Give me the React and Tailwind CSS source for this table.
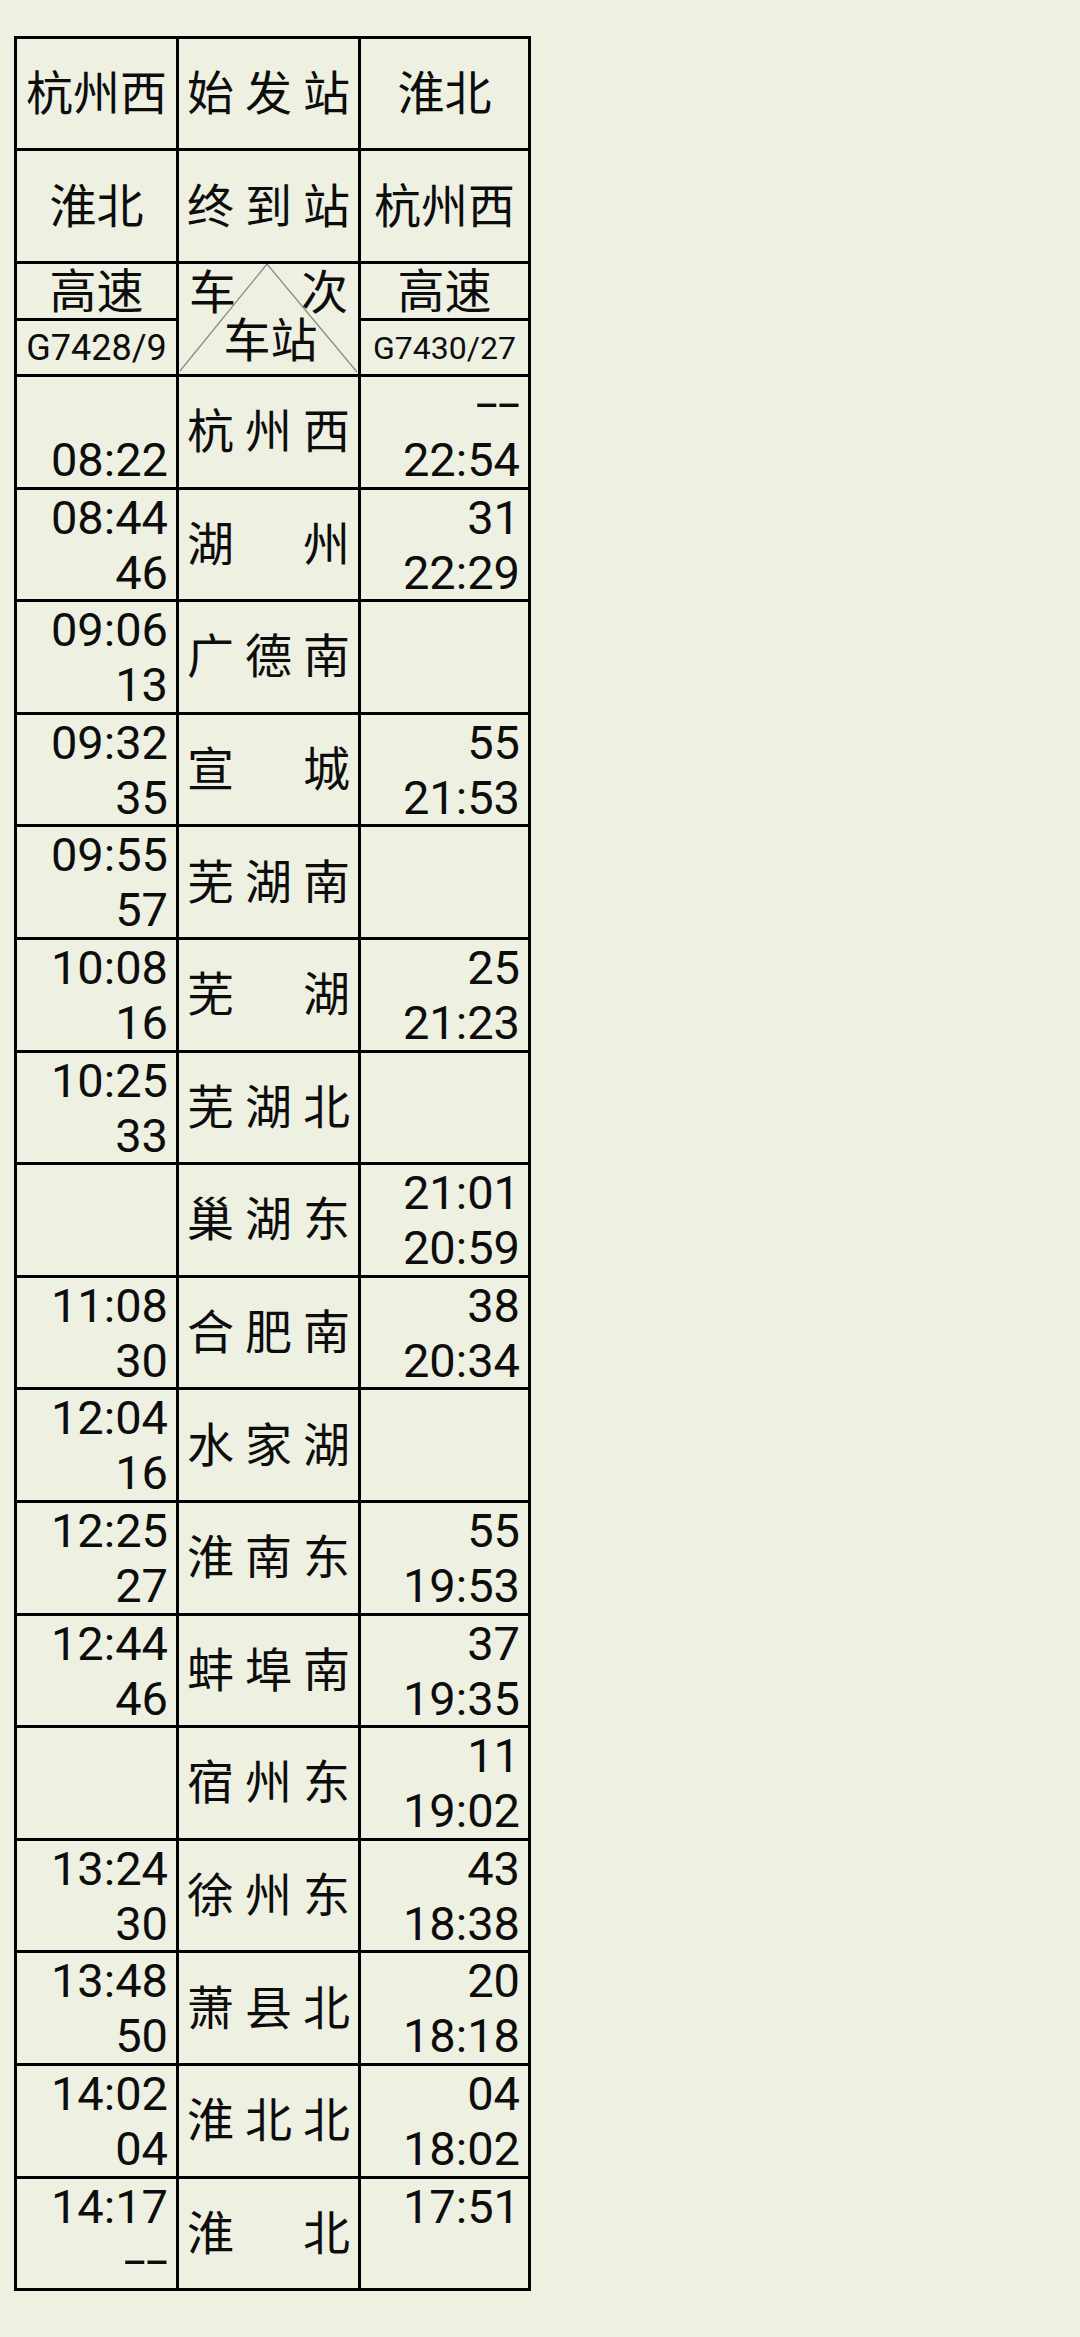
import React from "react";

const data = [
  ["", "08:22", "杭州西", "--", "22:54"],
  ["08:44", "46", "湖州", "31", "22:29"],
  ["09:06", "13", "广德南", "", ""],
  ["09:32", "35", "宣城", "55", "21:53"],
  ["09:55", "57", "芜湖南", "", ""],
  ["10:08", "16", "芜湖", "25", "21:23"],
  ["10:25", "33", "芜湖北", "", ""],
  ["", "", "巢湖东", "21:01", "20:59"],
  ["11:08", "30", "合肥南", "38", "20:34"],
  ["12:04", "16", "水家湖", "", ""],
  ["12:25", "27", "淮南东", "55", "19:53"],
  ["12:44", "46", "蚌埠南", "37", "19:35"],
  ["", "", "宿州东", "11", "19:02"],
  ["13:24", "30", "徐州东", "43", "18:38"],
  ["13:48", "50", "萧县北", "20", "18:18"],
  ["14:02", "04", "淮北北", "04", "18:02"],
  ["14:17", "--", "淮北", "17:51", ""],
];

function Line({ t }) {
  if (t === "--") {
    return (
      <div className="h-[55px] leading-[55px]">
        <span className="inline-block origin-right scale-x-[1.7] -translate-y-[2px]">--</span>
      </div>
    );
  }
  return <div className="h-[55px] leading-[55px]">{t}</div>;
}

function TimeCell({ a, b, w }) {
  return (
    <div className={`${w} h-full flex flex-col items-end pr-[8px] border-r-[3px] border-black overflow-visible`}>
      <Line t={a} />
      <Line t={b} />
    </div>
  );
}

function Spread({ text, className = "" }) {
  return (
    <div className={`flex items-center justify-between px-[8px] ${className}`}>
      {text.split("").map((c, i) => (
        <span key={i}>{c}</span>
      ))}
    </div>
  );
}

export default function App() {
  return (
    <div className="min-h-[2337px] w-full bg-[#eef0e2] text-[#0d0d0d] font-['Roboto','Noto_Sans_CJK_SC',sans-serif] pt-[36px] pl-[14px]">
      <div className="w-fit border-l-[3px] border-t-[3px] border-black text-[47px]">
        {/* header row 1 */}
        <div className="flex h-[112px] border-b-[3px] border-black">
          <div className="w-[162px] flex items-center justify-center border-r-[3px] border-black leading-none">杭州西</div>
          <Spread text="始发站" className="w-[182px] border-r-[3px] border-black leading-none" />
          <div className="w-[170px] flex items-center justify-center border-r-[3px] border-black leading-none">淮北</div>
        </div>
        {/* header row 2 */}
        <div className="flex h-[113px] border-b-[3px] border-black">
          <div className="w-[162px] flex items-center justify-center border-r-[3px] border-black leading-none">淮北</div>
          <Spread text="终到站" className="w-[182px] border-r-[3px] border-black leading-none" />
          <div className="w-[170px] flex items-center justify-center border-r-[3px] border-black leading-none">杭州西</div>
        </div>
        {/* header row 3 */}
        <div className="flex h-[113px] border-b-[3px] border-black">
          <div className="w-[162px] flex flex-col border-r-[3px] border-black">
            <div className="h-[57px] flex items-center justify-center border-b-[3px] border-black leading-none">高速</div>
            <div className="flex-1 flex items-center justify-center text-[36px] leading-none">G7428/9</div>
          </div>
          <div className="relative w-[182px] flex flex-col border-r-[3px] border-black">
            <svg className="absolute inset-0 w-full h-full" viewBox="0 0 179 110" preserveAspectRatio="none">
              <polyline points="1,107 88,0 178,108" fill="none" stroke="#8c8c82" strokeWidth="1.3" />
            </svg>
            <div className="relative h-[57px] flex items-center justify-between px-[10px] leading-none">
              <span>车</span>
              <span>次</span>
            </div>
            <div className="relative h-[38px] flex items-center justify-center pl-[4px] leading-none">车站</div>
          </div>
          <div className="w-[170px] flex flex-col border-r-[3px] border-black">
            <div className="h-[57px] flex items-center justify-center border-b-[3px] border-black leading-none">高速</div>
            <div className="flex-1 flex items-center justify-center text-[32px] leading-none">G7430/27</div>
          </div>
        </div>
        {/* data rows */}
        {data.map((r, i) => (
          <div key={i} className="flex h-[112.6px] border-b-[3px] border-black">
            <TimeCell a={r[0]} b={r[1]} w="w-[162px]" />
            <Spread text={r[2]} className="w-[182px] h-full border-r-[3px] border-black leading-none" />
            <TimeCell a={r[3]} b={r[4]} w="w-[170px]" />
          </div>
        ))}
      </div>
    </div>
  );
}
